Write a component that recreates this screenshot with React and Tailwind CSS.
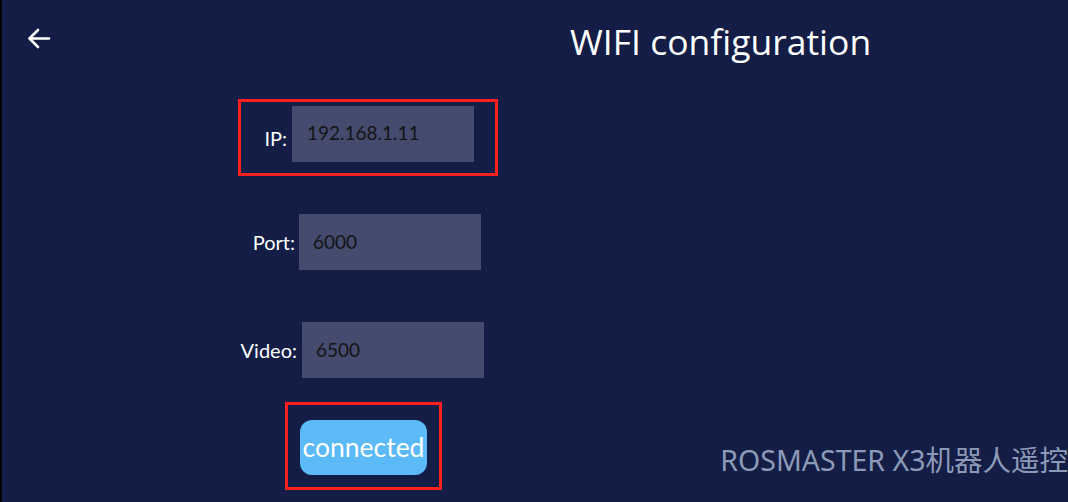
const fieldCls = 'w-[182px] h-[56px] bg-[#454b6e] flex items-center text-[19px] text-[#141414]'

function Field({ value, pl }) {
  return (
    <div className={fieldCls}>
      <span className={pl}>{value}</span>
    </div>
  )
}

export default function App() {
  return (
    <div
      className="w-[1068px] h-[502px] bg-[#141d45] border-l-2 border-black overflow-hidden flex flex-col relative"
      style={{ fontFamily: 'Lato, "Noto Sans", "Noto Sans CJK SC", sans-serif' }}
    >
      {/* header */}
      <div className="h-[99px] flex items-start shrink-0">
        <svg className="ml-[24px] mt-[27px]" width="26" height="24" viewBox="0 0 26 24" fill="none" stroke="white" strokeWidth="2.6" strokeLinecap="round" strokeLinejoin="round">
          <path d="M23 11.5H4" />
          <path d="M12 3L3.5 11.5L12 20" />
        </svg>
        <div
          className="ml-[518px] mt-[19px] text-white text-[35.5px] leading-[44px]"
          style={{ fontFamily: '"Open Sans", sans-serif' }}
        >
          WIFI configuration
        </div>
      </div>

      {/* IP */}
      <div className="ml-[236px] w-[260px] h-[77px] border-[3px] border-[#ff1f1f] flex items-center shrink-0">
        <span className="w-[46px] text-right text-white text-[20px]">IP:</span>
        <div className="ml-[5px] -mt-[8px]">
          <Field value="192.168.1.11" pl="pl-[15px]" />
        </div>
      </div>

      {/* Port */}
      <div className="ml-[236px] mt-[38px] flex items-center shrink-0">
        <span className="w-[57px] text-right text-white text-[20px]">Port:</span>
        <div className="ml-[4px]">
          <Field value="6000" pl="pl-[14px]" />
        </div>
      </div>

      {/* Video */}
      <div className="ml-[236px] mt-[52px] flex items-center shrink-0">
        <span className="w-[59px] text-right text-white text-[20px]">Video:</span>
        <div className="ml-[5px]">
          <Field value="6500" pl="pl-[14px]" />
        </div>
      </div>

      {/* button */}
      <div className="ml-[283px] mt-[24px] w-[157px] h-[88px] border-[3px] border-[#ff1f1f] flex shrink-0">
        <button className="ml-[12px] mt-[15px] w-[127px] h-[55px] rounded-[12px] bg-[#5bbaf7] text-white text-[26.5px] leading-none">
          connected
        </button>
      </div>

      <div
        className="absolute right-0 bottom-[28px] text-[28.5px] leading-none text-[#8c9ab8]"
        style={{ fontFamily: '"Noto Sans", "Noto Sans CJK SC", sans-serif' }}
      >
        ROSMASTER X3机器人遥控
      </div>
    </div>
  )
}
